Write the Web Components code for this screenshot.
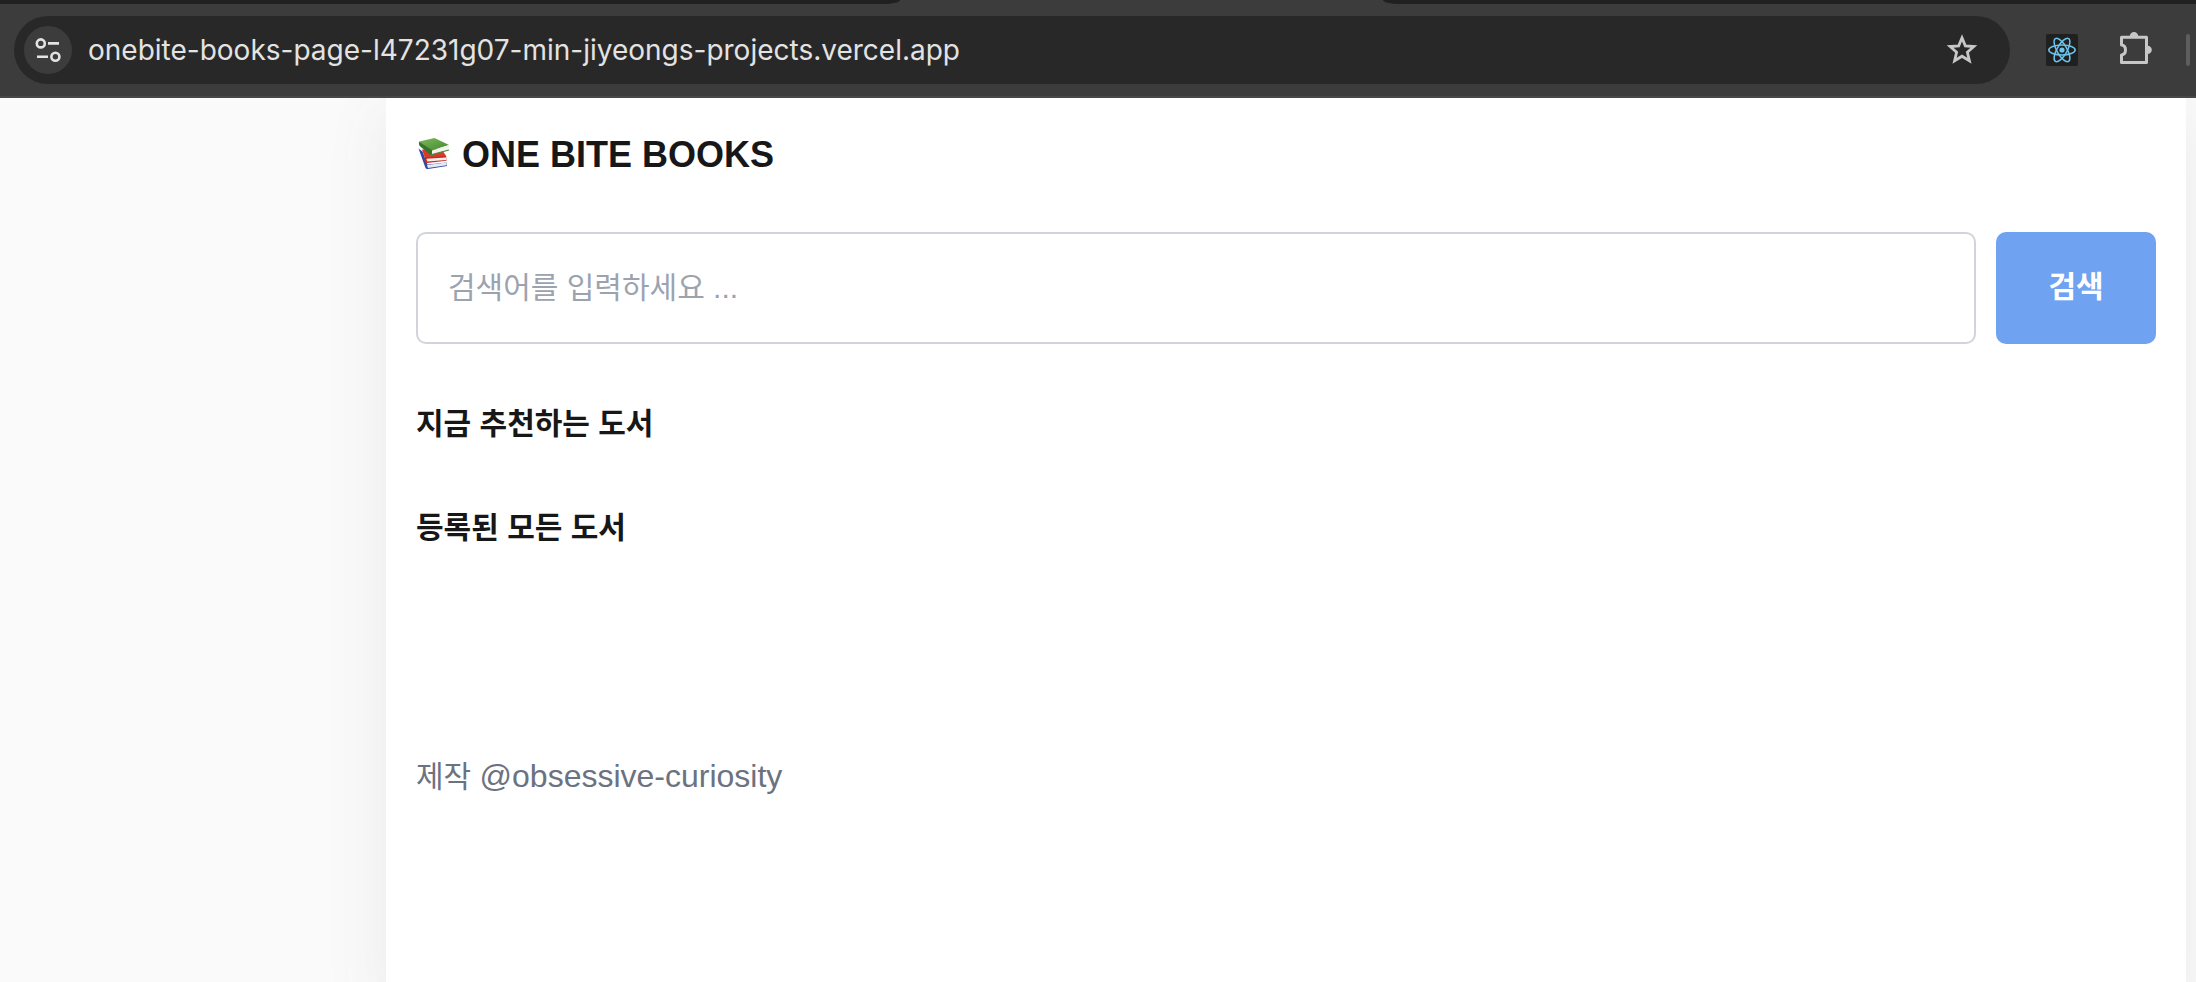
<!DOCTYPE html>
<html lang="ko">
<head>
<meta charset="UTF-8">
<meta name="viewport" content="width=device-width, initial-scale=1.0">
<title>ONE BITE BOOKS</title>
<style>
  html {
    height: 100%;
  }

  body {
    margin: 0;
    min-height: 100%;
    display: flex;
    flex-direction: column;
    background: #fafafa;
    color: #171717;
    font-family: "Liberation Sans", "Noto Sans CJK KR", sans-serif;
  }
</style>
</head>
<body>

<browser-bar url="onebite-books-page-l47231g07-min-jiyeongs-projects.vercel.app"></browser-bar>

<book-layout>
  <book-header slot="header">ONE BITE BOOKS</book-header>
  <search-bar placeholder="검색어를 입력하세요 ...">검색</search-bar>
  <book-section>지금 추천하는 도서</book-section>
  <book-section>등록된 모든 도서</book-section>
  <book-footer slot="footer">제작 <span slot="author">@obsessive-curiosity</span></book-footer>
</book-layout>

<script>
class BrowserBar extends HTMLElement {
  constructor() {
    super();
    this.attachShadow({ mode: "open" });
  }

  connectedCallback() {
    this.shadowRoot.innerHTML = `
      <style>
        :host {
          display: block;
          background: #3c3c3c;
          border-bottom: 2px solid #474747;
        }

        .tabs {
          display: flex;
          justify-content: space-between;
          height: 4px;
        }

        .tabs span {
          background: #1f2020;
        }

        .tabs__left {
          width: 41%;
          border-bottom-right-radius: 16px 4px;
        }

        .tabs__right {
          width: 37%;
          border-bottom-left-radius: 16px 4px;
        }

        .toolbar {
          display: flex;
          align-items: center;
          padding: 12px 6px 12px 14px;
        }

        .address {
          flex: 1;
          min-width: 0;
          height: 68px;
          display: flex;
          align-items: center;
          box-sizing: border-box;
          padding: 0 32px 0 10px;
          border-radius: 34px;
          background: #282828;
        }

        button {
          flex: none;
          display: block;
          border: 0;
          padding: 0;
          background: none;
          color: #c7c7c7;
        }

        svg {
          display: block;
        }

        .site-info {
          border-radius: 50%;
          background: #3c3c3c;
          color: #e3e3e3;
        }

        input {
          flex: 1;
          min-width: 0;
          margin: 0 16px;
          padding: 0;
          border: 0;
          outline: 0;
          background: none;
          color: #e3e3e3;
          font: 28px/40px Inter, sans-serif;
        }

        .tools {
          display: flex;
          align-items: center;
          gap: 34px;
          margin-left: 36px;
        }

        .divider {
          width: 4px;
          height: 32px;
          border-radius: 2px;
          background: #5e5e5e;
        }
      </style>

      <div class="tabs">
        <span class="tabs__left"></span>
        <span class="tabs__right"></span>
      </div>

      <div class="toolbar">
        <div class="address">
          <button class="site-info" type="button" aria-label="사이트 정보 보기">
            <svg width="48" height="48" viewBox="0 0 48 48" fill="none" stroke="currentColor" stroke-width="2.6">
              <circle cx="16.8" cy="17.4" r="4"/>
              <path d="M24 17.4h11M13 30.7h11"/>
              <circle cx="31.4" cy="30.7" r="4"/>
            </svg>
          </button>
          <input type="text" aria-label="주소창" spellcheck="false">
          <button type="button" aria-label="북마크">
            <svg width="32" height="36" viewBox="0 0 32 36" fill="none" stroke="currentColor" stroke-width="2.8">
              <path d="M16 5.8l3.3 8 8.6.7-6.5 5.7 2 8.5-7.4-4.5-7.4 4.5 2-8.5-6.5-5.7 8.6-.7z"/>
            </svg>
          </button>
        </div>

        <div class="tools">
          <button type="button" aria-label="React Developer Tools">
            <svg width="32" height="32" viewBox="0 0 32 32" fill="none" stroke="#6cc5ee" stroke-width="1.5">
              <rect width="32" height="32" rx="2" fill="#202020" stroke="none"/>
              <ellipse cx="16" cy="16" rx="13.2" ry="5"/>
              <ellipse cx="16" cy="16" rx="13.2" ry="5" transform="rotate(60 16 16)"/>
              <ellipse cx="16" cy="16" rx="13.2" ry="5" transform="rotate(120 16 16)"/>
              <circle cx="16" cy="16" r="2.6" fill="#6cc5ee" stroke="none"/>
            </svg>
          </button>
          <button type="button" aria-label="확장 프로그램">
            <svg width="40" height="40" viewBox="0 0 40 40">
              <path d="M9.500 7.300h25v25.200h-25v-7.600c5.300-.6 5.300-9.200 0-9.800z" fill="none" stroke="currentColor" stroke-width="3" stroke-linejoin="round"/>
              <path d="M17.800 6.300a4.200 4.200 0 0 1 8.400 0zM35.600 15.700a4.200 4.200 0 0 1 0 8.400z" fill="currentColor"/>
            </svg>
          </button>
          <span class="divider"></span>
        </div>
      </div>
    `;

    this.shadowRoot.querySelector("input").value = this.getAttribute("url");
  }
}

class BookLayout extends HTMLElement {
  constructor() {
    super();
    this.attachShadow({ mode: "open" });
  }

  connectedCallback() {
    this.shadowRoot.innerHTML = `
      <style>
        :host {
          flex: 1;
          display: flex;
          overflow: hidden;
          padding: 0 10px 0 386px;
        }

        .page {
          flex: 1;
          min-width: 0;
          padding: 0 30px;
          background: #ffffff;
          box-shadow: 0 14px 58px rgba(100, 100, 100, 0.1);
        }

        main {
          display: flex;
          flex-direction: column;
          padding-top: 20px;
        }
      </style>

      <div class="page">
        <slot name="header"></slot>
        <main><slot></slot></main>
        <slot name="footer"></slot>
      </div>
    `;
  }
}

class BookHeader extends HTMLElement {
  constructor() {
    super();
    this.attachShadow({ mode: "open" });
  }

  connectedCallback() {
    this.shadowRoot.innerHTML = `
      <style>
        :host {
          display: block;
        }

        a {
          display: flex;
          align-items: center;
          gap: 10px;
          height: 114px;
          color: inherit;
          font-size: 36px;
          font-weight: bold;
          line-height: 40px;
          text-decoration: none;
        }

        svg {
          flex: none;
        }
      </style>

      <a href="#">
        <svg width="36" height="36" viewBox="0 3 36 36" aria-hidden="true">
          <defs>
            <linearGradient id="green" x1="0" y1="0" x2="1" y2="1">
              <stop offset="0" stop-color="#7fb85c"/>
              <stop offset="1" stop-color="#3f8a2e"/>
            </linearGradient>
          </defs>
          <path d="M2.500 14.500l4 3 5 13 19-2 .5 3.500-19 3q-2 .3-2.700-1.500z" fill="#3048a4"/>
          <path d="M11 31l19.500-2.500.2 2.800-18.700 2.700z" fill="#e6e9f4"/>
          <path d="M6 15.500l19-1 5.500 8-20.500 4.500z" fill="#d93a2a"/>
          <path d="M9 23.500l21-1.500.5 4.800-19.500 2.200q-2.300 0-2.500-2.500z" fill="#c92b22"/>
          <path d="M10.500 24.700l19.500-1.200.2 2.500-19 1.500z" fill="#f6efee"/>
          <path d="M3.200 7.500L18.500 4 33 11 15.500 16.500z" fill="url(#green)"/>
          <path d="M3.200 7.500q-1 3 .5 4.500L15 21.300l1.500-4.800z" fill="#35752b"/>
          <path d="M16 16.500l17-5.500-.8 4.800L16 20.500z" fill="#f1f3ec"/>
          <path d="M15 20.800l18-4.800" stroke="#4a8c3b" stroke-width="1.200"/>
        </svg>
        <slot></slot>
      </a>
    `;
  }
}

class SearchBar extends HTMLElement {
  constructor() {
    super();
    this.attachShadow({ mode: "open" });
  }

  connectedCallback() {
    this.shadowRoot.innerHTML = `
      <style>
        :host {
          display: block;
          margin-bottom: 40px;
        }

        form {
          display: flex;
          gap: 20px;
        }

        input,
        button {
          height: 112px;
          box-sizing: border-box;
          border-radius: 10px;
          font-family: inherit;
          font-size: 30px;
        }

        input {
          flex: 1;
          min-width: 0;
          padding: 0 30px;
          border: 2px solid #d1d5db;
          background: #ffffff;
          color: inherit;
        }

        input::placeholder {
          color: #9ca3af;
          opacity: 1;
        }

        button {
          width: 160px;
          padding: 0 0 8px;
          border: 0;
          background: #70a2f2;
          color: #ffffff;
          font-weight: bold;
        }
      </style>

      <form>
        <input type="text" aria-label="검색어">
        <button type="button"><slot></slot></button>
      </form>
    `;

    this.shadowRoot.querySelector("input").placeholder = this.getAttribute("placeholder");
  }
}

class BookSection extends HTMLElement {
  constructor() {
    super();
    this.attachShadow({ mode: "open" });
  }

  connectedCallback() {
    this.shadowRoot.innerHTML = `
      <style>
        :host {
          display: block;
          margin-bottom: 24px;
        }

        h3 {
          margin: 0;
          padding: 16px 0;
          font-size: 30px;
          line-height: 48px;
        }
      </style>

      <section>
        <h3><slot></slot></h3>
      </section>
    `;
  }
}

class BookFooter extends HTMLElement {
  constructor() {
    super();
    this.attachShadow({ mode: "open" });
  }

  connectedCallback() {
    this.shadowRoot.innerHTML = `
      <style>
        :host {
          display: block;
          padding: 160px 0 200px;
          color: #6b7280;
          font-size: 30px;
          line-height: 48px;
        }

        ::slotted(span) {
          font-size: 32px;
        }
      </style>

      <footer><slot></slot><slot name="author"></slot></footer>
    `;
  }
}

customElements.define("browser-bar", BrowserBar);
customElements.define("book-layout", BookLayout);
customElements.define("book-header", BookHeader);
customElements.define("search-bar", SearchBar);
customElements.define("book-section", BookSection);
customElements.define("book-footer", BookFooter);
</script>
</body>
</html>
